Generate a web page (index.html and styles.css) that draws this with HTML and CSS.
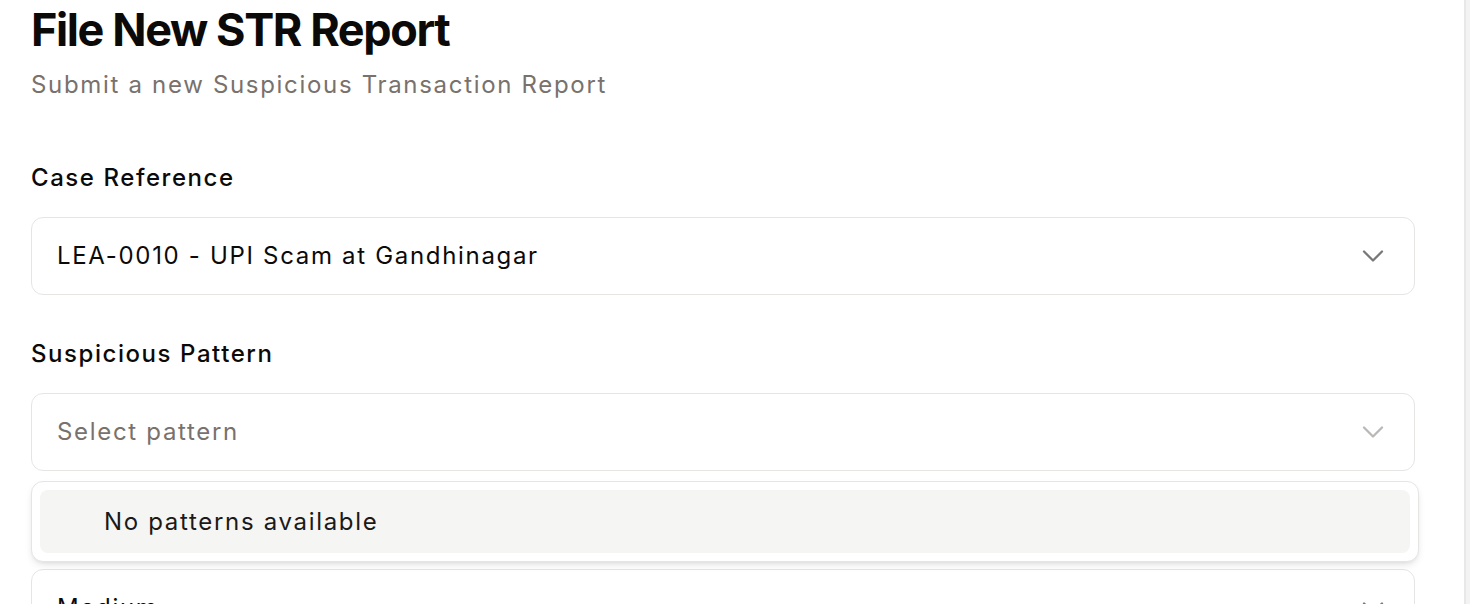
FILE: index.html
```html
<!DOCTYPE html>
<html lang="en">
<head>
<meta charset="utf-8">
<title>File New STR Report</title>
<link rel="stylesheet" href="styles.css">
</head>
<body>
<div class="page">
  <main class="main">
    <header class="header">
      <h1 class="title">File New STR Report</h1>
      <p class="subtitle">Submit a new Suspicious Transaction Report</p>
    </header>
    <form class="form">
      <div class="field">
        <label class="label">Case Reference</label>
        <div class="select">
          <span class="value">LEA-0010 - UPI Scam at Gandhinagar</span>
          <svg class="chev" viewBox="0 0 24 24" width="36" height="36"><path d="m6 9 6 6 6-6"/></svg>
        </div>
      </div>
      <div class="field field-pattern">
        <label class="label">Suspicious Pattern</label>
        <div class="select select-open">
          <span class="value placeholder">Select pattern</span>
          <svg class="chev chev-light" viewBox="0 0 24 24" width="36" height="36"><path d="m6 9 6 6 6-6"/></svg>
        </div>
        <div class="popover">
          <div class="item">No patterns available</div>
        </div>
      </div>
      <div class="field">
        <label class="label">Risk Level</label>
        <div class="select">
          <span class="value">Medium</span>
          <svg class="chev" viewBox="0 0 24 24" width="36" height="36"><path d="m6 9 6 6 6-6"/></svg>
        </div>
      </div>
    </form>
  </main>
  <div class="scrollbar"></div>
</div>
</body>
</html>
```
FILE: styles.css
```css
* { box-sizing: border-box; }
html, body { margin: 0; padding: 0; background: #ffffff; overflow: hidden; }
body {
  font-family: Inter, "Noto Sans", "Liberation Sans", sans-serif;
  color: #0c0a09;
  height: 604px;
}
.page { display: flex; height: 604px; }
.main { flex: 1; padding: 3px 49px 0 31px; }
.scrollbar {
  width: 6px;
  background: #f3f3f3;
  border-left: 2px solid #e8e8e8;
}
.title {
  margin: 0;
  font-size: 45px;
  line-height: 54px;
  font-weight: 700;
  letter-spacing: -0.031em;
  color: #0c0a09;
}
.subtitle {
  margin: 10px 0 0;
  font-size: 24px;
  line-height: 36px;
  letter-spacing: 0.07em;
  color: #78716c;
}
.form { display: flex; flex-direction: column; gap: 47px; margin-top: 63px; }
.field { display: flex; flex-direction: column; gap: 27px; position: relative; }
.label { font-size: 24px; line-height: 24px; font-weight: 500; letter-spacing: 0.065em; color: #0c0a09; }
.select {
  height: 78px;
  border: 1.5px solid #e7e5e4;
  border-radius: 12px;
  display: flex;
  align-items: center;
  justify-content: space-between;
  padding: 0 23px 0 25px;
  background: #fff;
}
.value { font-size: 24px; line-height: 36px; letter-spacing: 0.07em; color: #0c0a09; }
.placeholder { color: #78716c; }
.chev { fill: none; stroke: #0c0a09; stroke-width: 1.5; stroke-linecap: round; stroke-linejoin: round; opacity: 0.55; }
.chev-light { stroke: #78716c; opacity: 0.5; }
.popover {
  position: absolute;
  left: 0;
  right: -4px;
  top: 139px;
  z-index: 10;
  background: #fff;
  border: 1px solid #e7e5e4;
  border-radius: 12px;
  padding: 8px;
  box-shadow: 0 4px 8px -2px rgba(0,0,0,0.12), 0 2px 4px -2px rgba(0,0,0,0.08);
}
.item {
  height: 63px;
  display: flex;
  align-items: center;
  padding-left: 64px;
  background: #f5f5f4;
  border-radius: 8px;
  font-size: 24px;
  letter-spacing: 0.07em;
  color: #1c1917;
}
```
